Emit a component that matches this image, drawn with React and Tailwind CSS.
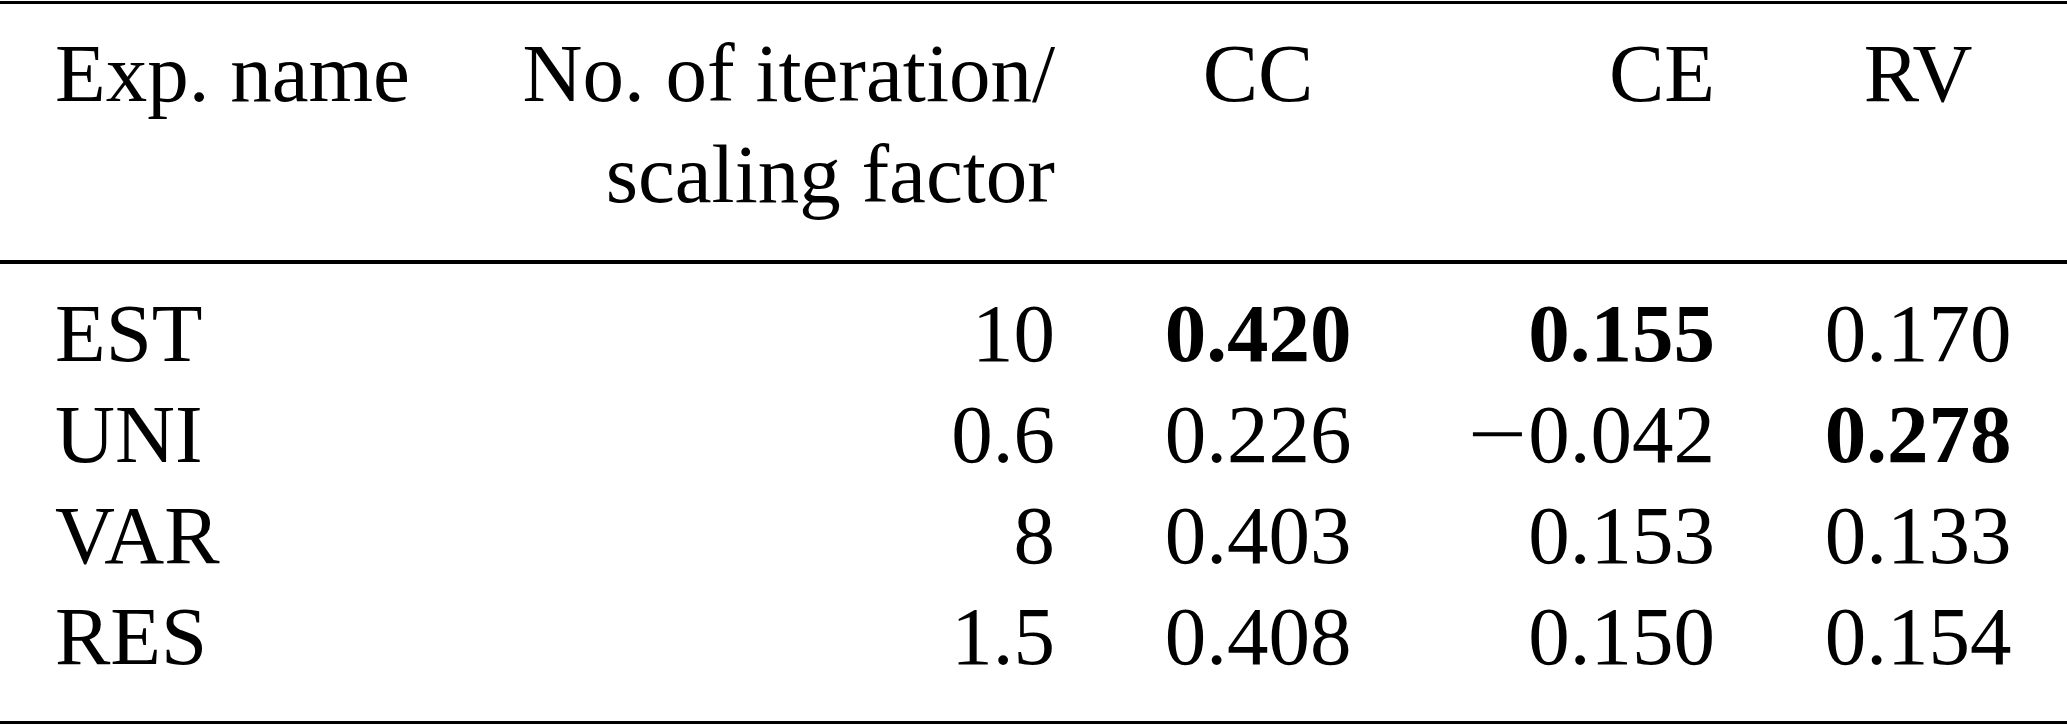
const rows = [
  { name: "EST", n: "10", cc: "0.420", ce: "0.155", rv: "0.170", bold: ["cc", "ce"] },
  { name: "UNI", n: "0.6", cc: "0.226", ce: "0.042", neg: true, rv: "0.278", bold: ["rv"] },
  { name: "VAR", n: "8", cc: "0.403", ce: "0.153", rv: "0.133", bold: [] },
  { name: "RES", n: "1.5", cc: "0.408", ce: "0.150", rv: "0.154", bold: [] },
];

const cols = "grid grid-cols-[503px_552px_406px_254px_53px_300px]";

const App = () => {
  return (
    <div className="w-[2067px] h-[727px] bg-white pt-px text-black font-['Liberation_Serif','Times_New_Roman',serif] text-[83px] leading-[101.3px] overflow-hidden">
      <div className="border-t-[3px] border-black">
        {/* header */}
        <div className={`${cols} pt-[19px] pb-[34px] border-b-[4px] border-black`}>
          <div className="pl-[55px] whitespace-nowrap">Exp. name</div>
          <div className="text-right whitespace-nowrap">
            No. of iteration/
            <br />
            scaling factor
          </div>
          <div className="text-center">CC</div>
          <div className="text-right">CE</div>
          <div></div>
          <div className="text-center">RV</div>
        </div>

        {/* body */}
        <div className="pt-[19px] pb-[33px] border-b-[3px] border-black">
          {rows.map((r) => (
            <div key={r.name} className={cols}>
              <div className="pl-[55px]">{r.name}</div>
              <div className="text-right">{r.n}</div>
              <div className={`text-center ${r.bold.includes("cc") ? "font-bold" : ""}`}>{r.cc}</div>
              <div className={`text-right whitespace-nowrap ${r.bold.includes("ce") ? "font-bold" : ""}`}>
                {r.neg && <span className="inline-block mx-[7px] scale-x-[1.27]">{"\u2212"}</span>}
                {r.ce}
              </div>
              <div></div>
              <div className={`text-center ${r.bold.includes("rv") ? "font-bold" : ""}`}>{r.rv}</div>
            </div>
          ))}
        </div>
      </div>
    </div>
  );
};

export default App;
